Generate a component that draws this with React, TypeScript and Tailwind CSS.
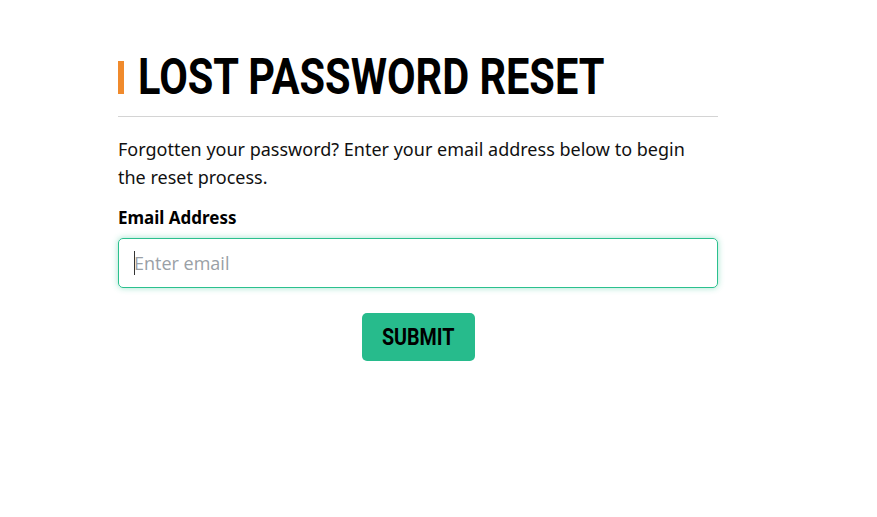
export default function App() {
  return (
    <div className="min-h-[517px] bg-white pt-[48px]">
      <div className="ml-[118px] w-[600px]">
        {/* Heading */}
        <div className="flex items-center gap-[14px] pb-[10px] border-b border-[#d4d4d4]">
          <span className="block w-[6px] h-[33px] bg-[#f08a2c]" />
          <h1 className="origin-left scale-x-[0.83] whitespace-nowrap text-[50px] leading-[58px] font-bold text-black font-['Roboto',sans-serif]">
            LOST PASSWORD RESET
          </h1>
        </div>

        <p className="mt-[18px] w-[585px] text-[18px] leading-[28px] text-[#111] font-['Noto_Sans',sans-serif]">
          Forgotten your password? Enter your email address below to begin the reset process.
        </p>

        <form onSubmit={(e) => e.preventDefault()}>
          <label className="block mt-[15px] text-[17px] leading-[24px] font-bold text-black font-['Noto_Sans',sans-serif]">
            Email Address
          </label>
          <div className="relative mt-[8px]">
            <input
              type="email"
              placeholder="Enter email"
              className="w-full h-[50px] rounded-[5px] border border-[#2bc08e] px-[15px] text-[18px] text-[#333] placeholder:text-[#9aa0a6] outline-none shadow-[0_0_6px_rgba(43,192,142,0.45)] font-['Open_Sans',sans-serif]"
            />
            <span className="absolute left-[16px] top-[13px] w-px h-[24px] bg-[#333]" />
          </div>
          <div className="flex justify-center mt-[25px]">
            <button
              type="submit"
              className="w-[113px] h-[48px] rounded-[5px] bg-[#27bb8c] text-black font-bold text-[24px] font-['Roboto',sans-serif]"
            >
              <span className="inline-block scale-x-[0.82]">SUBMIT</span>
            </button>
          </div>
        </form>
      </div>
    </div>
  );
}
